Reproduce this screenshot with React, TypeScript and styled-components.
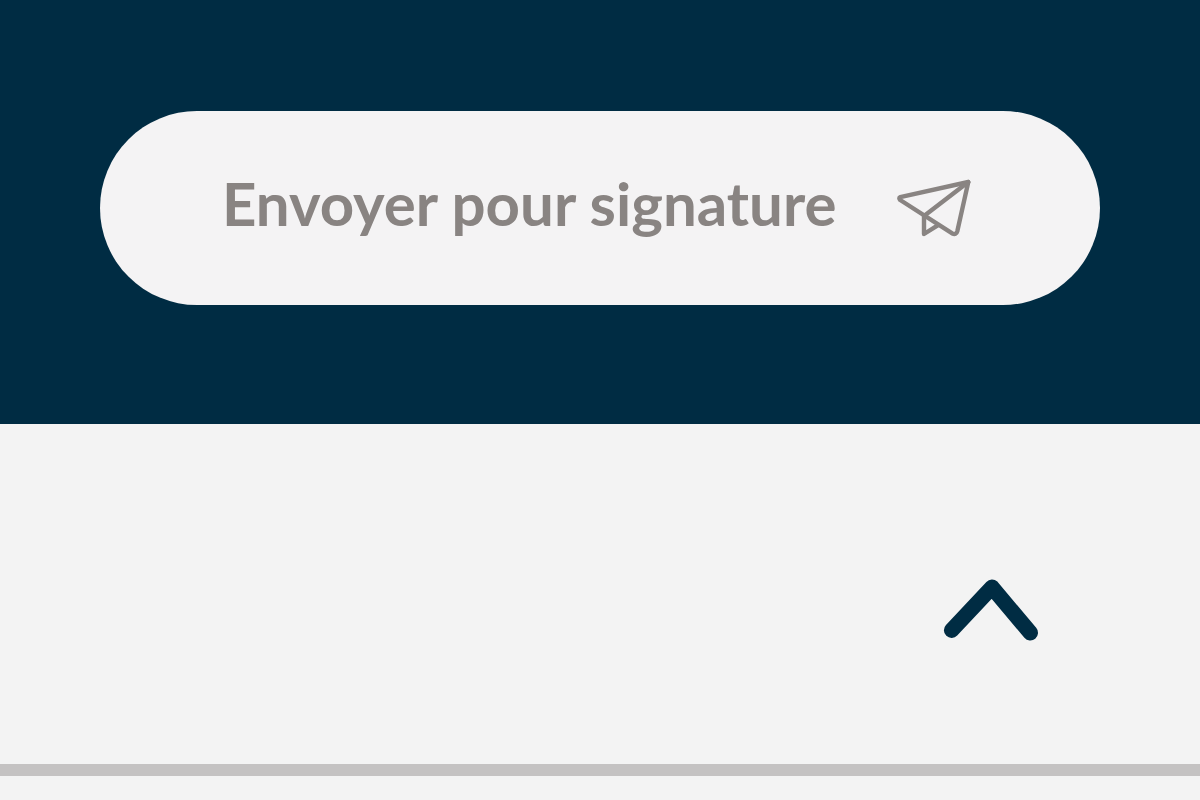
import React from "react";
import styled, { createGlobalStyle } from "styled-components";

const GlobalStyle = createGlobalStyle`
  * {
    box-sizing: border-box;
  }

  body {
    margin: 0;
    background: #f3f3f3;
    font-family: Lato, "Liberation Sans", sans-serif;
  }
`;

const Page = styled.main`
  display: flex;
  flex-direction: column;
  min-height: 100vh;
`;

const ActionPanel = styled.section`
  display: flex;
  padding: 111px 100px 119px;
  background: #002c43;
`;

const SendButton = styled.button`
  display: flex;
  flex: 1;
  align-items: center;
  justify-content: space-between;
  gap: 24px;
  padding: 55px 125px 55px 122px;
  border: 0;
  border-radius: 97px;
  background: #f4f3f4;
  color: #898482;
  font-family: inherit;
  font-size: 60px;
  font-weight: 700;
  line-height: 74px;
  white-space: nowrap;
  cursor: pointer;
`;

const Label = styled.span`
  padding-bottom: 10px;
`;

const PlaneIcon = styled.svg`
  flex: none;
  width: 80px;
  height: 64px;
  fill: none;
  stroke: currentColor;
  stroke-width: 4.4;
  stroke-linecap: round;
  stroke-linejoin: round;
`;

const CollapsePanel = styled.section`
  display: flex;
  justify-content: flex-end;
  padding: 148px 156px 116px;
`;

const CollapseButton = styled.button`
  display: flex;
  padding: 0;
  border: 0;
  background: none;
  color: #002c43;
  cursor: pointer;
`;

const ChevronIcon = styled.svg`
  width: 108px;
  height: 76px;
  fill: none;
  stroke: currentColor;
  stroke-width: 15.4;
  stroke-linecap: round;
  stroke-linejoin: round;
`;

const Divider = styled.hr`
  width: 100%;
  height: 12px;
  margin: 0;
  border: 0;
  background: #c4c2c2;
`;

export default function App() {
  return (
    <Page>
      <GlobalStyle />
      <ActionPanel>
        <SendButton type="button">
          <Label>Envoyer pour signature</Label>
          <PlaneIcon viewBox="0 0 80 64" aria-hidden="true">
            <path d="M5.2 21.2 73.3 6 62.3 55.2Q61.3 59.2 57.2 57.4L5.2 24Q3.4 21.8 5.2 21.2Z" />
            <path d="M73.3 6 29 40V58L42.7 49.3" />
          </PlaneIcon>
        </SendButton>
      </ActionPanel>
      <CollapsePanel>
        <CollapseButton type="button" aria-label="Replier">
          <ChevronIcon viewBox="0 0 108 76" aria-hidden="true">
            <path d="M15.6 58.2 56 15.2 94.3 60.8" />
          </ChevronIcon>
        </CollapseButton>
      </CollapsePanel>
      <Divider />
    </Page>
  );
}
